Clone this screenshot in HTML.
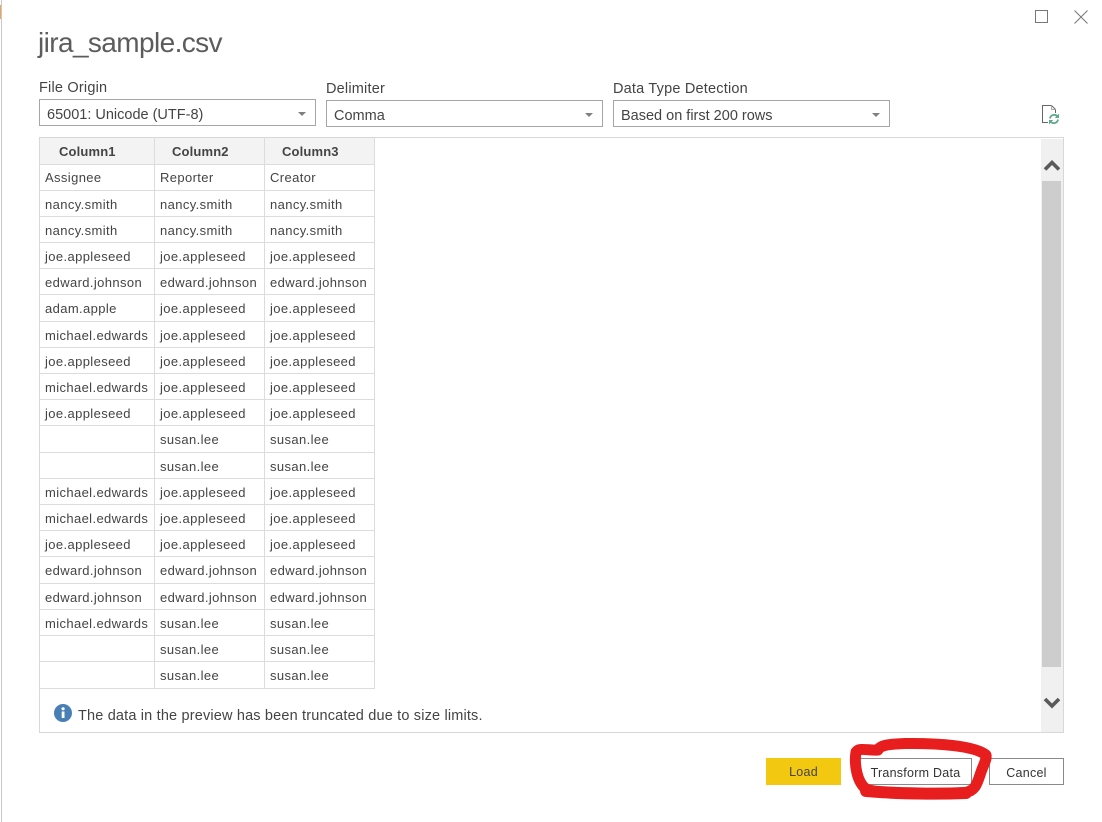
<!DOCTYPE html>
<html><head><meta charset="utf-8"><style>
html,body{margin:0;padding:0;background:#fff}
body{width:1102px;height:822px;position:relative;overflow:hidden;font-family:"Liberation Sans",sans-serif;color:#3d3d3d}
.a{position:absolute;white-space:nowrap}
.lbl{font-size:14.5px;line-height:18px;color:#444;letter-spacing:.2px}
.sel{position:absolute;box-sizing:border-box;height:27px;border:1px solid #a6a6a6;background:#fff;font-size:14.5px;line-height:31px;padding-left:7px;color:#444;letter-spacing:0;white-space:nowrap}
.sel i{position:absolute;right:9px;top:12px;width:0;height:0;border-left:4px solid transparent;border-right:4px solid transparent;border-top:4px solid #808080}
.t{font-size:13px;line-height:18px;color:#444;letter-spacing:.38px}
.h{font-size:13px;line-height:18px;font-weight:bold;color:#444;letter-spacing:.15px}
.btn{position:absolute;box-sizing:border-box;height:27px;text-align:center;font-size:12.5px;line-height:28px;color:#333;letter-spacing:.25px;white-space:nowrap}
</style></head><body>
<div class="a" style="left:1px;top:0;width:1px;height:822px;background:#c8c8c8"></div>
<div class="a" style="left:0;top:5px;width:1px;height:14px;background:#f0a35a"></div>
<div class="a" style="left:38px;top:24px;font-size:28px;line-height:38px;color:#5c5c5c;letter-spacing:-.6px">jira_sample.csv</div>

<svg class="a" style="left:1030px;top:5px" width="60" height="24" viewBox="0 0 60 24"><rect x="5.5" y="5.5" width="12" height="12" fill="none" stroke="#777" stroke-width="1"/><path d="M44.5 5.5L57.5 18.5M57.5 5.5L44.5 18.5" stroke="#777" stroke-width="1" fill="none"/></svg>

<div class="a lbl" style="left:39px;top:79px">File Origin</div>
<div class="a lbl" style="left:326px;top:80px">Delimiter</div>
<div class="a lbl" style="left:613px;top:80px">Data Type Detection</div>
<div class="sel" style="left:39px;top:99px;width:277px">65001: Unicode (UTF-8)<i></i></div>
<div class="sel" style="left:326px;top:100px;width:277px">Comma<i></i></div>
<div class="sel" style="left:613px;top:100px;width:277px">Based on first 200 rows<i></i></div>

<svg class="a" style="left:1040px;top:104px" width="22" height="22" viewBox="0 0 22 22"><path d="M8 18.5H2.5V1.500H11.500L15.500 5.500V9" fill="none" stroke="#666" stroke-width="1"/><path d="M11.500 1.500V5.500H15.500" fill="none" stroke="#aaa" stroke-width="1"/><path d="M10 14.500A4.200 4.200 0 0 1 17.500 12.500M18 15.500A4.200 4.200 0 0 1 10.500 17.500" fill="none" stroke="#5fa98c" stroke-width="1.800"/><path d="M19 9.500V14H14.800Z M9 20.500V16H13.200Z" fill="#5fa98c"/></svg>

<div class="a" style="left:39px;top:137px;width:1025px;height:596px;box-sizing:border-box;border:1px solid #d8d8d8"></div>
<div class="a" style="left:1041px;top:139px;width:22px;height:593px;background:#f0f0f0"></div>
<div class="a" style="left:1042px;top:181px;width:19px;height:486px;background:#cdcdcd"></div>
<svg class="a" style="left:1041px;top:155px" width="22" height="20" viewBox="0 0 22 20"><path d="M4 14.500L11 7.500L18 14.500" fill="none" stroke="#5a5a5a" stroke-width="3.600"/></svg>
<svg class="a" style="left:1041px;top:693px" width="22" height="20" viewBox="0 0 22 20"><path d="M4 6L11 13L18 6" fill="none" stroke="#5a5a5a" stroke-width="3.600"/></svg>

<div class="a" style="left:40px;top:138px;width:335px;height:26px;background:#f3f3f3"></div>
<svg class="a" style="left:39px;top:137px" width="337" height="553" viewBox="0 0 337 553"><g fill="none" stroke="#dcdcdc" stroke-width="1"><path d="M115.500 0V552M225.500 0V552M335.500 0V552"/><path d="M0 27.500H336M0 53.500H336M0 79.500H336M0 105.500H336M0 131.500H336M0 157.500H336M0 184.500H336M0 210.500H336M0 236.500H336M0 262.500H336M0 288.500H336M0 315.500H336M0 341.500H336M0 367.500H336M0 393.500H336M0 419.500H336M0 446.500H336M0 472.500H336M0 498.500H336M0 524.500H336M0 551.500H336"/></g></svg>

<div class="a h" style="left:59px;top:143px">Column1</div><div class="a h" style="left:172px;top:143px">Column2</div><div class="a h" style="left:282px;top:143px">Column3</div>

<div class="a t" style="left:45px;top:169px">Assignee</div><div class="a t" style="left:160px;top:169px">Reporter</div><div class="a t" style="left:270px;top:169px">Creator</div>
<div class="a t" style="left:45px;top:196px">nancy.smith</div><div class="a t" style="left:160px;top:196px">nancy.smith</div><div class="a t" style="left:270px;top:196px">nancy.smith</div>
<div class="a t" style="left:45px;top:222px">nancy.smith</div><div class="a t" style="left:160px;top:222px">nancy.smith</div><div class="a t" style="left:270px;top:222px">nancy.smith</div>
<div class="a t" style="left:45px;top:248px">joe.appleseed</div><div class="a t" style="left:160px;top:248px">joe.appleseed</div><div class="a t" style="left:270px;top:248px">joe.appleseed</div>
<div class="a t" style="left:45px;top:274px">edward.johnson</div><div class="a t" style="left:160px;top:274px">edward.johnson</div><div class="a t" style="left:270px;top:274px">edward.johnson</div>
<div class="a t" style="left:45px;top:300px">adam.apple</div><div class="a t" style="left:160px;top:300px">joe.appleseed</div><div class="a t" style="left:270px;top:300px">joe.appleseed</div>
<div class="a t" style="left:45px;top:327px">michael.edwards</div><div class="a t" style="left:160px;top:327px">joe.appleseed</div><div class="a t" style="left:270px;top:327px">joe.appleseed</div>
<div class="a t" style="left:45px;top:353px">joe.appleseed</div><div class="a t" style="left:160px;top:353px">joe.appleseed</div><div class="a t" style="left:270px;top:353px">joe.appleseed</div>
<div class="a t" style="left:45px;top:379px">michael.edwards</div><div class="a t" style="left:160px;top:379px">joe.appleseed</div><div class="a t" style="left:270px;top:379px">joe.appleseed</div>
<div class="a t" style="left:45px;top:405px">joe.appleseed</div><div class="a t" style="left:160px;top:405px">joe.appleseed</div><div class="a t" style="left:270px;top:405px">joe.appleseed</div>
<div class="a t" style="left:160px;top:431px">susan.lee</div><div class="a t" style="left:270px;top:431px">susan.lee</div>
<div class="a t" style="left:160px;top:458px">susan.lee</div><div class="a t" style="left:270px;top:458px">susan.lee</div>
<div class="a t" style="left:45px;top:484px">michael.edwards</div><div class="a t" style="left:160px;top:484px">joe.appleseed</div><div class="a t" style="left:270px;top:484px">joe.appleseed</div>
<div class="a t" style="left:45px;top:510px">michael.edwards</div><div class="a t" style="left:160px;top:510px">joe.appleseed</div><div class="a t" style="left:270px;top:510px">joe.appleseed</div>
<div class="a t" style="left:45px;top:536px">joe.appleseed</div><div class="a t" style="left:160px;top:536px">joe.appleseed</div><div class="a t" style="left:270px;top:536px">joe.appleseed</div>
<div class="a t" style="left:45px;top:562px">edward.johnson</div><div class="a t" style="left:160px;top:562px">edward.johnson</div><div class="a t" style="left:270px;top:562px">edward.johnson</div>
<div class="a t" style="left:45px;top:589px">edward.johnson</div><div class="a t" style="left:160px;top:589px">edward.johnson</div><div class="a t" style="left:270px;top:589px">edward.johnson</div>
<div class="a t" style="left:45px;top:615px">michael.edwards</div><div class="a t" style="left:160px;top:615px">susan.lee</div><div class="a t" style="left:270px;top:615px">susan.lee</div>
<div class="a t" style="left:160px;top:641px">susan.lee</div><div class="a t" style="left:270px;top:641px">susan.lee</div>
<div class="a t" style="left:160px;top:667px">susan.lee</div><div class="a t" style="left:270px;top:667px">susan.lee</div>

<svg class="a" style="left:54px;top:704px" width="18" height="18" viewBox="0 0 18 18"><circle cx="9" cy="9" r="9" fill="#4a7fb5"/><rect x="7.700" y="7.500" width="2.800" height="6.500" fill="#fff"/><circle cx="9.100" cy="4.800" r="1.600" fill="#fff"/></svg>
<div class="a" style="left:78px;top:707px;font-size:14.5px;line-height:18px;color:#444;letter-spacing:.17px">The data in the preview has been truncated due to size limits.</div>

<div class="btn" style="left:766px;top:758px;width:75px;background:#f2c811;color:#444">Load</div>
<div class="btn" style="left:859px;top:758px;width:113px;border:1px solid #8a8a8a;background:#fff">Transform Data</div>
<div class="btn" style="left:989px;top:758px;width:75px;border:1px solid #8a8a8a;background:#fff">Cancel</div>

<svg class="a" style="left:840px;top:730px" width="160" height="80" viewBox="840 730 160 80"><g fill="none" stroke="#e81e1e" stroke-linejoin="round" stroke-linecap="round"><path d="M878 750C870 751 859 747 856 752C854 765 857 782 866 789C880 794 930 795 965 792.500C975 791 977 784 980 775C983 765 987 760 986 755C975 746 940 743 905 743.500C890 744 880 745 878 750" stroke-width="11"/><path d="M866 791C900 794 940 794 966 793" stroke-width="12"/></g></svg>
</body></html>
